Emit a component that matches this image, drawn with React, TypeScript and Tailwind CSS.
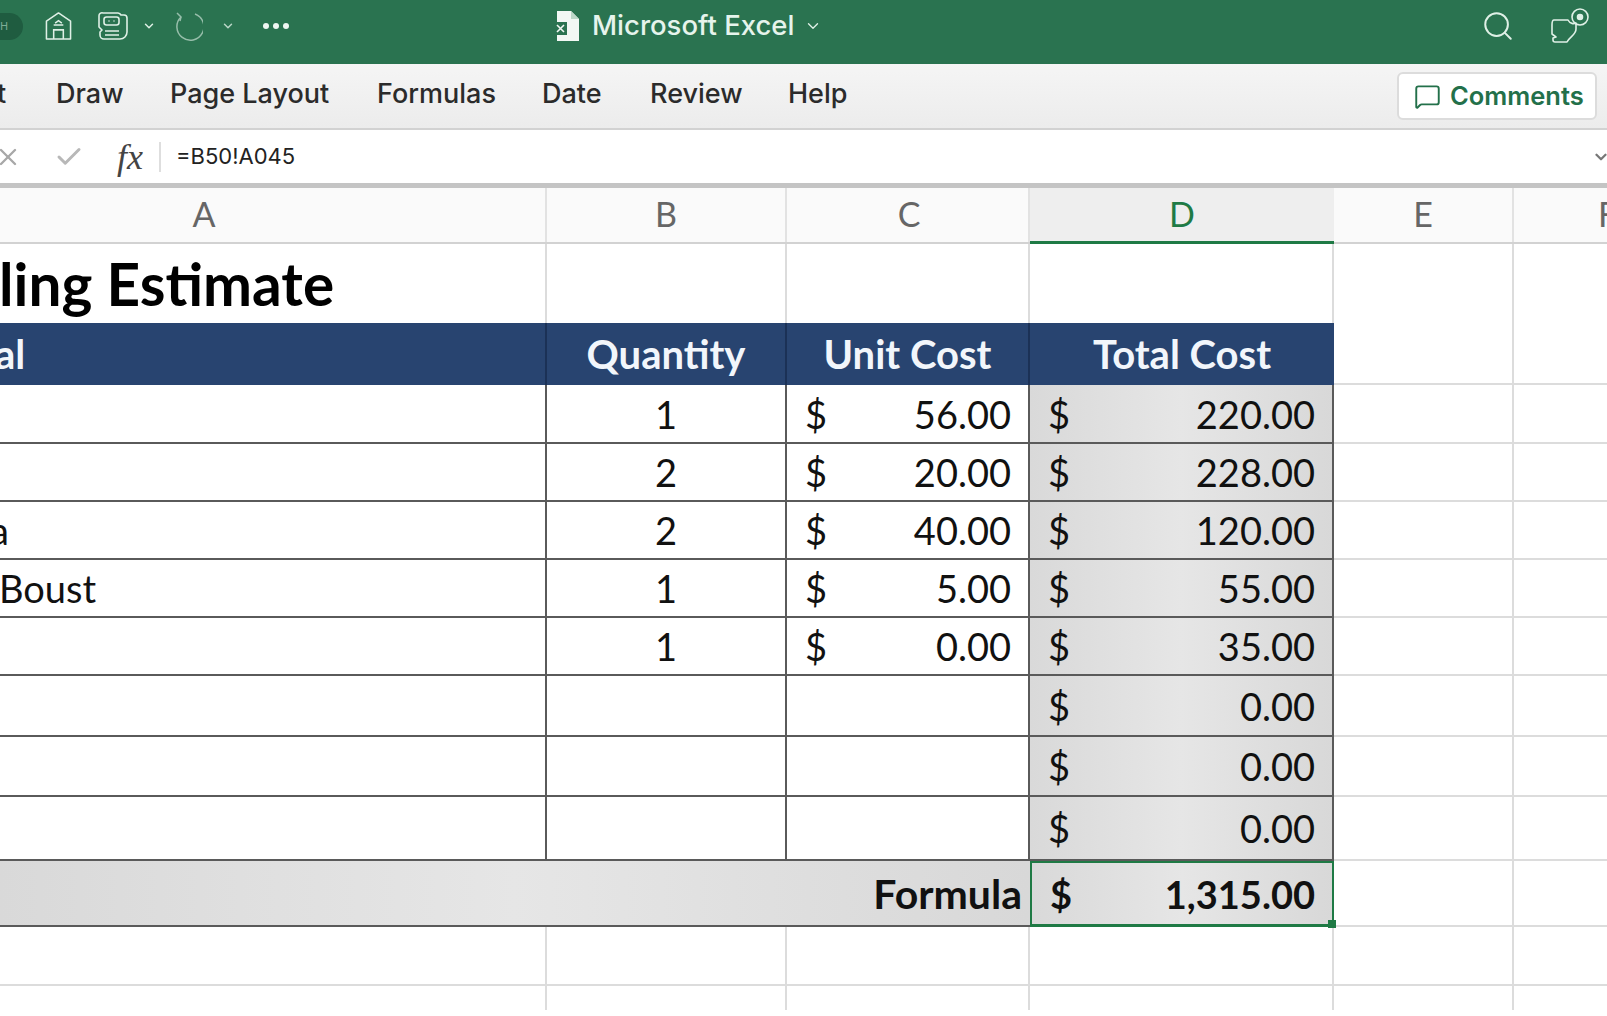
import { Check, ChevronDown, MessageSquare, Search, X } from 'lucide-react';

const SHEET_COLS = 'grid grid-cols-[547px_240px_243px_304px_180px_93px]';
const SHADE = 'bg-linear-to-r from-[#d9d9d9] via-[#e6e6e6] to-[#d8d8d8]';

const ITEMS = [
  { a: '', qty: '1', unit: '56.00', total: '220.00', h: 'h-[59px]' },
  { a: '', qty: '2', unit: '20.00', total: '228.00', h: 'h-[58px]' },
  { a: 'a', qty: '2', unit: '40.00', total: '120.00', h: 'h-[58px]' },
  { a: 'Boust', qty: '1', unit: '5.00', total: '55.00', h: 'h-[58px]' },
  { a: '', qty: '1', unit: '0.00', total: '35.00', h: 'h-[58px]' },
  { a: '', qty: '', unit: '', total: '0.00', h: 'h-[61px]' },
  { a: '', qty: '', unit: '', total: '0.00', h: 'h-[60px]' },
  { a: '', qty: '', unit: '', total: '0.00', h: 'h-[64px]' },
];

function TitleBar() {
  return (
    <div className="flex h-[64px] items-center bg-[#2a7350] pb-[12px] text-[#dff0e6]">
      <div className="flex h-[27px] w-[23px] items-center rounded-r-full bg-[#1f5c40] text-[11px] text-[#7fae97]">H</div>
      <svg className="ml-[22px]" width="27" height="30" viewBox="0 0 28 30" fill="none" stroke="currentColor" strokeWidth="1.6">
        <path d="M1.5 10 14 1.5 26.5 10v18.5h-25z" strokeLinejoin="round" />
        <path d="M9 28.5V19h10v9.5M10.5 12l3.5-2.5 3.5 2.5M9 14h10" />
      </svg>
      <svg className="ml-[26px]" width="30" height="29" viewBox="0 0 30 29" fill="none" stroke="currentColor" strokeWidth="1.6">
        <path d="M5 1h15a4 4 0 0 1 3 2h3a3 3 0 0 1 3 3v14a7 7 0 0 1-7 7H6a4 4 0 0 1-4-4v-3l2-2-3-3V4a3 3 0 0 1 4-3z" strokeLinejoin="round" />
        <rect x="6" y="5" width="15" height="8" rx="2.5" />
        <path d="M11 8.5v1M16 8.5v1M7 19h14M7 23h14" />
      </svg>
      <ChevronDown className="ml-[14px]" size={14} strokeWidth={2.5} />
      <svg className="ml-[17px] opacity-60" width="30" height="32" viewBox="0 0 30 32" fill="none" stroke="currentColor" strokeWidth="1.5">
        <path d="M8 7a13.5 13.5 0 1 0 14-3" />
        <path d="M4 3l4 4-1 4" />
      </svg>
      <ChevronDown className="ml-[18px] opacity-80" size={14} strokeWidth={2.5} />
      <div className="ml-[28px] flex gap-[4px]">
        <span className="size-[6px] rounded-full bg-[#eef7f2]" />
        <span className="size-[6px] rounded-full bg-[#eef7f2]" />
        <span className="size-[6px] rounded-full bg-[#eef7f2]" />
      </div>
      <svg className="ml-[265px]" width="27" height="31" viewBox="0 0 27 31">
        <path d="M3 0h14l8 8v22H3z" fill="#f2f8f4" />
        <path d="M17 0v8h8" fill="#bcd8c8" />
        <rect x="0" y="11" width="13" height="13" fill="#2a7350" />
        <path d="M3 14l7 7M10 14l-7 7" stroke="#f2f8f4" strokeWidth="1.6" />
      </svg>
      <span className="ml-[11px] font-['Inter',sans-serif] text-[27.5px] font-medium text-[#e6f4ec]">Microsoft Excel</span>
      <ChevronDown className="ml-[10px]" size={18} strokeWidth={1.8} />
      <div className="ml-auto flex items-center">
        <Search size={34} strokeWidth={1.4} />
        <svg className="mr-[17px] ml-[31px]" width="44" height="38" viewBox="0 0 44 38" fill="none" stroke="currentColor" strokeWidth="1.6">
          <path d="M8 13h14c2 4 6 4 8 3v6c0 6-6 7-9 13H9a2 2 0 0 1-2-2v-2l3-1-4-3v-9c0-3 1-5 2-5z" strokeLinejoin="round" />
          <circle cx="34" cy="10" r="8" />
          <circle cx="34" cy="10" r="2.5" fill="currentColor" />
        </svg>
      </div>
    </div>
  );
}

function RibbonTabs() {
  return (
    <div className="flex h-[66px] items-center border-b-2 border-[#d2d2d2] bg-linear-to-b from-[#f5f5f5] to-[#ececec] pb-[4px] font-['Inter',sans-serif] text-[27px] font-medium text-[#2b2b2b]">
      <span className="-ml-[3px] w-[59px]">t</span>
      <span className="w-[114px]">Draw</span>
      <span className="w-[207px]">Page Layout</span>
      <span className="w-[165px]">Formulas</span>
      <span className="w-[108px]">Date</span>
      <span className="w-[138px]">Review</span>
      <span>Help</span>
      <button className="mt-[4px] mr-[10px] ml-auto flex h-[48px] w-[200px] items-center rounded-md border-2 border-[#dcdcdc] bg-white pl-[15px] text-[25.5px] text-[#23704a]">
        <MessageSquare size={27} strokeWidth={1.7} />
        <span className="ml-[9px] font-semibold">Comments</span>
      </button>
    </div>
  );
}

function FormulaBar() {
  return (
    <div className="flex h-[58px] items-center border-b-[5px] border-[#c4c4c4] bg-white">
      <X className="-ml-[6px] text-[#a8a8a8]" size={28} strokeWidth={2} />
      <Check className="ml-[32px] text-[#b8b8b8]" size={30} strokeWidth={2.4} />
      <span className="ml-[33px] font-['Liberation_Serif',serif] text-[36px] leading-none text-[#444] italic">fx</span>
      <span className="ml-[16px] h-[30px] w-[2px] bg-[#dedede]" />
      <span className="ml-[15px] font-['Inter',sans-serif] text-[22px] text-[#222]">=B50!A045</span>
      <ChevronDown className="mr-[-3px] ml-auto text-[#777]" size={18} strokeWidth={3} />
    </div>
  );
}

function ColumnHeaders() {
  return (
    <div className={`${SHEET_COLS} h-[56px] border-b-2 border-[#d2d2d2] bg-[#fafafa] text-center font-['Lato',sans-serif] text-[34px] leading-[52px] text-[#666]`}>
      <div className="border-r-2 border-[#e2e2e2] pr-[137px]">A</div>
      <div className="border-r-2 border-[#e2e2e2]">B</div>
      <div className="border-r-2 border-[#e2e2e2] pl-[3px]">C</div>
      <div className="-mb-[2px] border-b-[3px] border-[#1f7a45] bg-[#eeeeee] text-[#1f7a45]">D</div>
      <div className="border-r-2 border-[#e2e2e2]">E</div>
      <div className="overflow-hidden pl-[84px] text-left">F</div>
    </div>
  );
}

function Money({ value, bold }: { value: string; bold?: boolean }) {
  return (
    <div className={`flex h-full items-center justify-between pr-[17px] pl-[18px] text-[38px] text-[#111] ${bold ? 'font-bold' : ''}`}>
      <span>$</span>
      <span>{value}</span>
    </div>
  );
}

function ItemRow({ a, qty, unit, total, h }: (typeof ITEMS)[number]) {
  const line = 'border-b-2 border-[#5a5a5a]';
  return (
    <div className={`${SHEET_COLS} ${h} leading-none`}>
      <div className={`${line} flex items-center overflow-hidden border-r-2 text-[38px]`}>
        <span className={a === 'a' ? '-ml-[10px]' : '-ml-[1px]'}>{a}</span>
      </div>
      <div className={`${line} flex items-center justify-center border-r-2 text-[38px]`}>{qty}</div>
      <div className={`${line} border-r-2`}>{unit && <Money value={unit} />}</div>
      <div className={`${line} border-r-2 ${SHADE}`}>
        <Money value={total} />
      </div>
      <div className="border-r-2 border-b-2 border-[#dcdcdc]" />
      <div className="border-b-2 border-[#dcdcdc]" />
    </div>
  );
}

function Sheet() {
  const light = 'border-r-2 border-[#dcdcdc]';
  return (
    <div className="font-['Lato',sans-serif] text-[#111]">
      <div className={`${SHEET_COLS} h-[79px]`}>
        <div className={`${light} overflow-hidden pt-[7px] text-[58.5px] leading-[64px] font-bold whitespace-nowrap text-black`}>
          <span className="-ml-[1px] block">ling Estimate</span>
        </div>
        <div className={light} />
        <div className={light} />
        <div className={light} />
        <div className={light} />
        <div />
      </div>
      <div className={`${SHEET_COLS} h-[62px] text-[40px] leading-none font-bold text-[#f2f6fb]`}>
        <div className="flex items-center overflow-hidden border-r-2 border-[#1b3156] bg-[#284470]">
          <span className="-ml-[5px]">al</span>
        </div>
        <div className="flex items-center justify-center border-r-2 border-[#1b3156] bg-[#284470]">Quantity</div>
        <div className="flex items-center justify-center border-r-2 border-[#1b3156] bg-[#284470]">Unit Cost</div>
        <div className="flex items-center justify-center bg-[#284470]">Total Cost</div>
        <div className={`${light} border-b-2`} />
        <div className="border-b-2 border-[#dcdcdc]" />
      </div>
      {ITEMS.map((item, i) => (
        <ItemRow key={i} {...item} />
      ))}
      <div className={`${SHEET_COLS} h-[66px] leading-none`}>
        <div className={`col-span-3 flex items-center justify-end border-b-2 border-[#5a5a5a] pr-[8px] text-[41px] font-bold ${SHADE}`}>Formula</div>
        <div className={`relative border-2 border-b-[3px] border-[#1f7a45] ${SHADE}`}>
          <Money value="1,315.00" bold />
          <span className="absolute -right-[4px] -bottom-[4px] size-[8px] bg-[#1f7a45]" />
        </div>
        <div className={`${light} border-b-2`} />
        <div className="border-b-2 border-[#dcdcdc]" />
      </div>
      <div className={`${SHEET_COLS} h-[59px]`}>
        {[0, 1, 2, 3, 4].map((c) => (
          <div key={c} className={`${light} border-b-2`} />
        ))}
        <div className="border-b-2 border-[#dcdcdc]" />
      </div>
      <div className={`${SHEET_COLS} h-[24px]`}>
        {[0, 1, 2, 3, 4].map((c) => (
          <div key={c} className={light} />
        ))}
      </div>
    </div>
  );
}

export default function App() {
  return (
    <div className="h-[1016px] w-[1607px] overflow-hidden bg-white">
      <TitleBar />
      <RibbonTabs />
      <FormulaBar />
      <ColumnHeaders />
      <Sheet />
    </div>
  );
}
